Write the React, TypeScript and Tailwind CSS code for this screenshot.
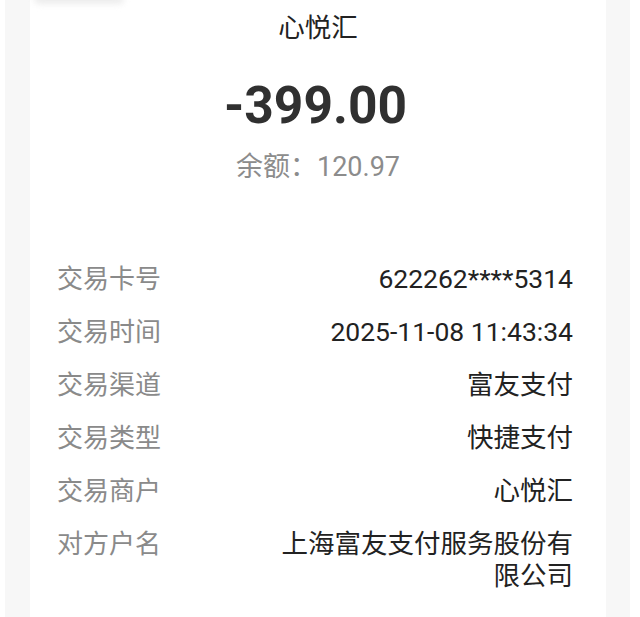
const rows: { label: string; value: string }[] = [
  { label: '交易卡号', value: '622262****5314' },
  { label: '交易时间', value: '2025-11-08 11:43:34' },
  { label: '交易渠道', value: '富友支付' },
  { label: '交易类型', value: '快捷支付' },
  { label: '交易商户', value: '心悦汇' },
  { label: '对方户名', value: '上海富友支付服务股份有限公司' },
];

export default function App() {
  return (
    <div
      className="min-h-[617px] w-[640px] bg-white pl-[5px] pr-[10px] overflow-hidden"
      style={{ fontFamily: 'Roboto, "Noto Sans CJK SC", sans-serif' }}
    >
      <div className="flex min-h-[617px] bg-[#f7f7f7] pl-[25px] pr-[24px]">
        <div className="relative flex-1 bg-white pl-[27px] pr-[33px] pt-[12px] pb-[20px]">
          {/* faint leftover shadow at the very top */}
          <div className="absolute left-[4px] top-[-6px] h-[10px] w-[90px] rounded-full bg-[#ececec] blur-[3px]" />

          {/* Header */}
          <div className="text-center">
            <div className="pl-[6px] text-[26.5px] leading-[32px] text-[#222]">心悦汇</div>
            <div className="mt-[32px] pl-[1px] text-[51.5px] leading-[60px] font-bold text-[#303030]">-399.00</div>
            <div className="mt-[15px] pl-[6px] text-[27px] leading-[32px] text-[#8c8c8c]">余额：120.97</div>
          </div>

          {/* Details */}
          <div className="mt-[80px] flex flex-col gap-[21px]">
            {rows.map((row) => (
              <div key={row.label} className="flex items-start justify-between leading-[32px]">
                <span className="shrink-0 text-[26px] text-[#8a8a8a]">{row.label}</span>
                <span className="max-w-[300px] text-right text-[26.5px] text-[#222]">{row.value}</span>
              </div>
            ))}
          </div>
        </div>
      </div>
    </div>
  );
}
